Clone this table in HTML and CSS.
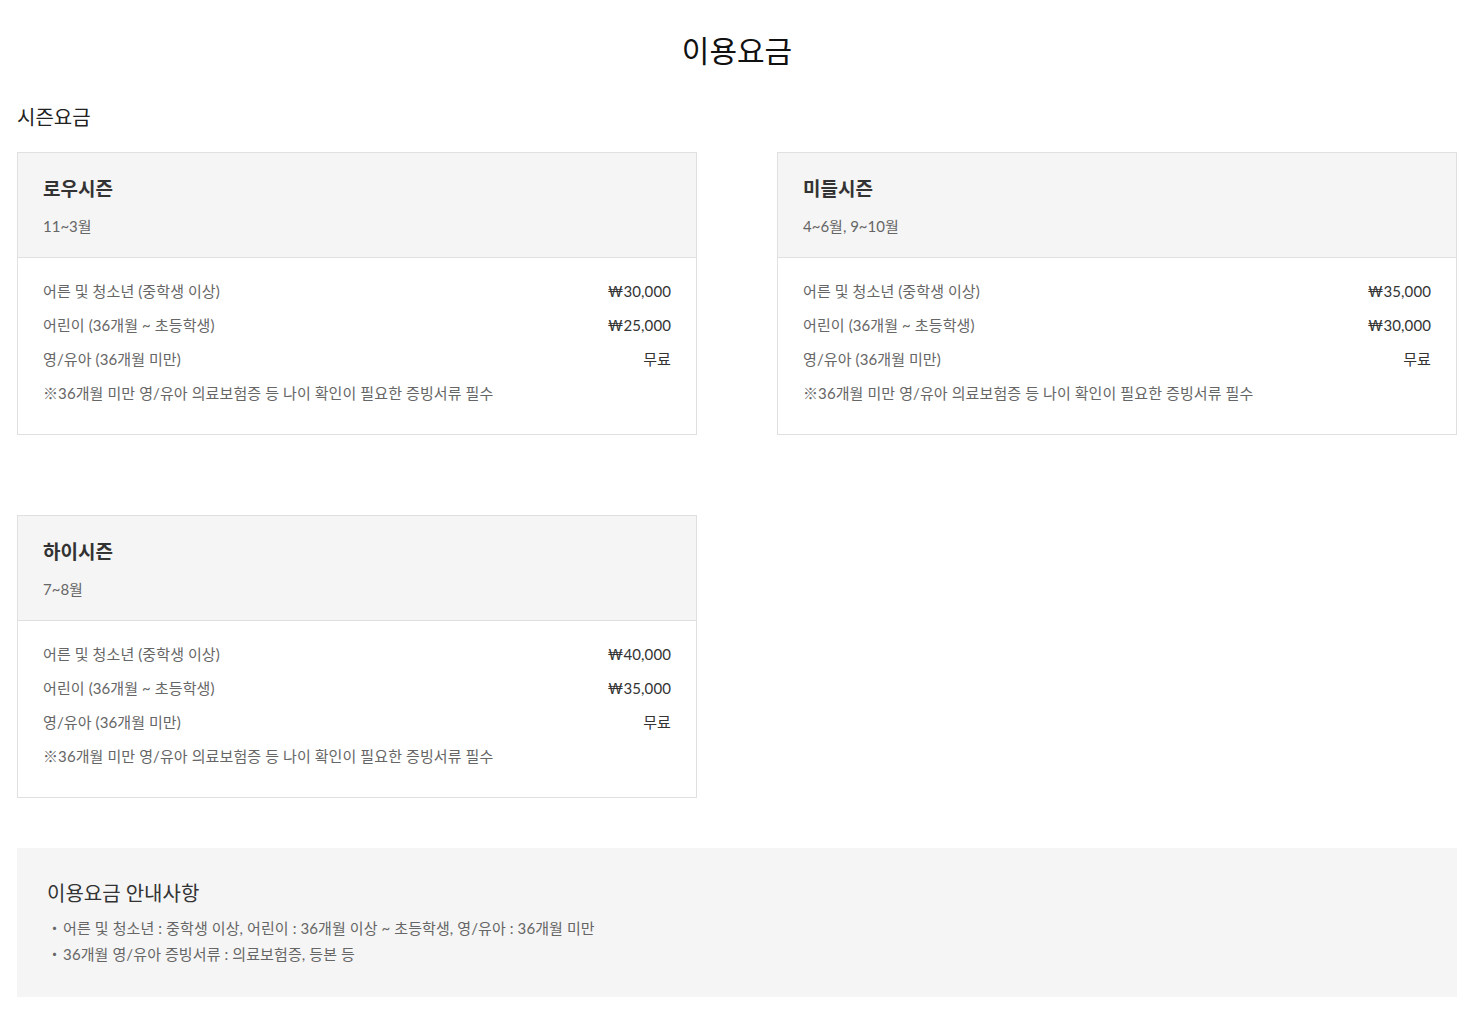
FILE: index.html
```html
<!DOCTYPE html>
<html lang="ko">
<head>
<meta charset="utf-8">
<title>이용요금</title>
<link rel="stylesheet" href="styles.css">
</head>
<body>
<main class="page">
  <h1 class="page-title">이용요금</h1>
  <h2 class="section-title">시즌요금</h2>
  <div class="cards">
    <section class="card">
      <div class="card-head">
        <h3 class="card-title">로우시즌</h3>
        <p class="card-period">11~3월</p>
      </div>
      <div class="card-body">
        <div class="row"><span>어른 및 청소년 (중학생 이상)</span><span class="price">₩30,000</span></div>
        <div class="row"><span>어린이 (36개월 ~ 초등학생)</span><span class="price">₩25,000</span></div>
        <div class="row"><span>영/유아 (36개월 미만)</span><span class="price">무료</span></div>
        <div class="row"><span>※36개월 미만 영/유아 의료보험증 등 나이 확인이 필요한 증빙서류 필수</span></div>
      </div>
    </section>
    <section class="card">
      <div class="card-head">
        <h3 class="card-title">미들시즌</h3>
        <p class="card-period">4~6월, 9~10월</p>
      </div>
      <div class="card-body">
        <div class="row"><span>어른 및 청소년 (중학생 이상)</span><span class="price">₩35,000</span></div>
        <div class="row"><span>어린이 (36개월 ~ 초등학생)</span><span class="price">₩30,000</span></div>
        <div class="row"><span>영/유아 (36개월 미만)</span><span class="price">무료</span></div>
        <div class="row"><span>※36개월 미만 영/유아 의료보험증 등 나이 확인이 필요한 증빙서류 필수</span></div>
      </div>
    </section>
    <section class="card">
      <div class="card-head">
        <h3 class="card-title">하이시즌</h3>
        <p class="card-period">7~8월</p>
      </div>
      <div class="card-body">
        <div class="row"><span>어른 및 청소년 (중학생 이상)</span><span class="price">₩40,000</span></div>
        <div class="row"><span>어린이 (36개월 ~ 초등학생)</span><span class="price">₩35,000</span></div>
        <div class="row"><span>영/유아 (36개월 미만)</span><span class="price">무료</span></div>
        <div class="row"><span>※36개월 미만 영/유아 의료보험증 등 나이 확인이 필요한 증빙서류 필수</span></div>
      </div>
    </section>
  </div>
  <section class="notice">
    <h3 class="notice-title">이용요금 안내사항</h3>
    <ul class="notice-list">
      <li>어른 및 청소년 : 중학생 이상, 어린이 : 36개월 이상 ~ 초등학생, 영/유아 : 36개월 미만</li>
      <li>36개월 영/유아 증빙서류 : 의료보험증, 등본 등</li>
    </ul>
  </section>
</main>
</body>
</html>
```

FILE: styles.css
```css
* { box-sizing: border-box; }
html, body { margin: 0; padding: 0; background: #fff; }
body {
  font-family: "Lato", "Noto Sans CJK KR", sans-serif;
  color: #555;
}
.page {
  padding: 30px 17px 13px;
}
.page-title {
  margin: 0;
  text-align: center;
  font-size: 30px;
  line-height: 40px;
  font-weight: 400;
  color: #111;
}
.section-title {
  margin: 33px 0 0;
  font-size: 20px;
  line-height: 28px;
  font-weight: 400;
  color: #222;
}
.cards {
  margin-top: 21px;
  display: grid;
  grid-template-columns: 680px 680px;
  column-gap: 80px;
  row-gap: 80px;
}
.card {
  border: 1px solid #e0e0e0;
  background: #fff;
}
.card-head {
  background: #f5f5f5;
  border-bottom: 1px solid #e0e0e0;
  padding: 24px 25px 21px;
}
.card-title {
  margin: 0;
  font-size: 19px;
  line-height: 24px;
  font-weight: 700;
  color: #333;
}
.card-period {
  margin: 15px 0 0;
  font-size: 15px;
  line-height: 20px;
  color: #666;
}
.card-body {
  padding: 16px 25px 24px;
}
.row {
  display: flex;
  justify-content: space-between;
  font-size: 15px;
  line-height: 34px;
  color: #666;
  letter-spacing: 0.1px;
}
.price {
  color: #333;
}
.notice {
  margin-top: 50px;
  background: #f5f5f5;
  padding: 32px 30px 30px;
}
.notice-title {
  margin: 0;
  font-size: 20px;
  line-height: 26px;
  font-weight: 400;
  color: #333;
}
.notice-list {
  margin: 9px 0 0;
  padding: 0;
  list-style: none;
}
.notice-list li {
  font-size: 15px;
  line-height: 26px;
  color: #666;
  letter-spacing: 0.1px;
}
.notice-list li::before {
  content: "・";
  margin-right: 1px;
}
```
